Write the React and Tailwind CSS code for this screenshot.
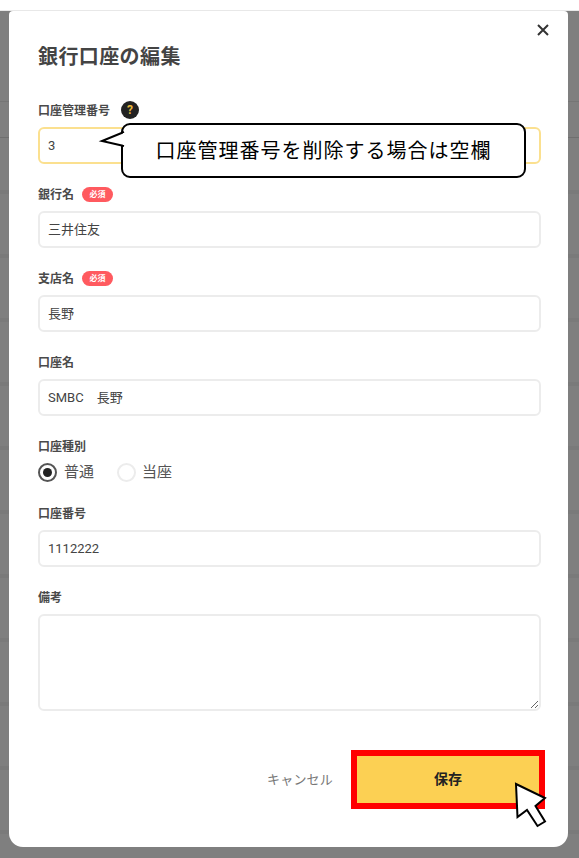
import React from "react";

const bgRows = Array.from({ length: 11 });

const Label = ({ children, required, className = "" }) => (
  <div className={`flex items-center h-[16px] pt-[1px] text-[12px] font-bold text-[#4a4a4a] ${className}`}>
    <span>{children}</span>
    {required && (
      <span className="ml-[8px] flex items-center justify-center w-[31px] h-[15px] rounded-full bg-[#ff5a5f] text-white text-[8px]">
        必須
      </span>
    )}
  </div>
);

const Input = ({ value, className = "border-[#ececec]" }) => (
  <div className={`mt-[9px] flex items-center h-[37px] px-[8px] rounded-[6px] border-2 text-[13px] text-[#444] ${className}`}>
    {value}
  </div>
);

const Field = ({ label, value, required }) => (
  <div className="mt-[22px]">
    <Label required={required}>{label}</Label>
    <Input value={value} />
  </div>
);

export default function App() {
  return (
    <div
      className="relative w-[579px] h-[858px] overflow-hidden bg-[#7f7f7f] flex flex-col text-[#333]"
      style={{ fontFamily: '"Roboto", "Noto Sans CJK JP", sans-serif' }}
    >
      {/* page behind the modal */}
      <div className="absolute inset-x-0 top-[101px] border-t border-[#757575] h-[36px]" />
      <div className="absolute inset-x-0 top-[137px] border-t border-[#6f6f6f] h-[36px]" />
      <div className="absolute inset-x-0 top-[190px] flex flex-col">
        {bgRows.map((_, i) => (
          <div key={i} className="h-[64px] shrink-0">
            <div className="h-[4px] bg-[#7a7a7a]" />
          </div>
        ))}
      </div>

      <div className="relative h-[11px] shrink-0 bg-white border-b border-[#e8e8e8]" />
      <div className="relative ml-[9px] mr-[11px] h-[836px] rounded-b-[14px] rounded-t-[4px] bg-white pl-[29px] pr-[27px] pt-[32px]">
        <button className="absolute right-[18px] top-[12px] text-[#333]">
          <svg width="14" height="14" viewBox="0 0 14 14" fill="none" stroke="currentColor" strokeWidth="2">
            <path d="M2 2 L12 12 M12 2 L2 12" />
          </svg>
        </button>
        <h1 className="text-[20px] leading-[28px] tracking-[0.4px] font-bold text-[#444]">銀行口座の編集</h1>

        <div className="mt-[31px]">
          <div className="flex items-center h-[16px]">
            <Label>口座管理番号</Label>
            <span className="ml-[11px] flex items-center justify-center w-[18px] h-[18px] rounded-full bg-[#222] text-[#e8b93c] text-[12px] font-bold">
              ?
            </span>
          </div>
          <Input value="3" className="border-[#fbe08f]" />
        </div>

        <Field label="銀行名" value="三井住友" required />
        <Field label="支店名" value="長野" required />
        <Field label="口座名" value="SMBC　長野" />

        <div className="mt-[22px]">
          <Label>口座種別</Label>
          <div className="mt-[5px] flex items-center h-[26px] text-[15px] text-[#555]">
            <span className="flex items-center justify-center w-[19px] h-[19px] rounded-full border-2 border-[#555]">
              <span className="w-[9px] h-[9px] rounded-full bg-[#222]" />
            </span>
            <span className="ml-[7px]">普通</span>
            <span className="ml-[23px] w-[19px] h-[19px] rounded-full border-2 border-[#ececec]" />
            <span className="ml-[6px]">当座</span>
          </div>
        </div>

        <div className="mt-[20px]">
          <Label>口座番号</Label>
          <Input value="1112222" />
        </div>

        <div className="mt-[22px]">
          <Label>備考</Label>
          <textarea className="mt-[9px] block w-full h-[97px] rounded-[6px] border-2 border-[#ececec] outline-none" />
        </div>

        <div className="mt-[39px] flex items-center">
          <span className="ml-[229px] w-[84px] text-[13px] tracking-[0.2px] text-[#777]">キャンセル</span>
          <button className="-mr-[4px] flex-1 h-[59px] border-[6px] border-[#ff0000] bg-[#fcd053] text-[14px] font-bold text-[#222]">
            保存
          </button>
        </div>
      </div>

      {/* callout over the first input */}
      <div className="absolute left-[121px] top-[123px] w-[405px] h-[55px] flex items-center justify-center rounded-[9px] border-2 border-black bg-white text-[20px] tracking-[1px] text-black">
        <svg className="absolute -left-[26px] top-[3px]" width="28" height="26" viewBox="0 0 28 26">
          <path d="M27 4 L5 13 L27 18" fill="white" stroke="black" strokeWidth="2" />
          <rect x="26" y="5" width="3" height="12" fill="white" />
        </svg>
        口座管理番号を削除する場合は空欄
      </div>

      {/* arrow cursor */}
      <svg className="absolute left-[513px] top-[780px]" width="36" height="50" viewBox="0 0 36 50">
        <path d="M3 4 L4.5 37 L14 30 L24.5 46 L32 41.5 L22.5 26 L32 18 Z" fill="white" stroke="black" strokeWidth="2" strokeLinejoin="miter" />
      </svg>
    </div>
  );
}
